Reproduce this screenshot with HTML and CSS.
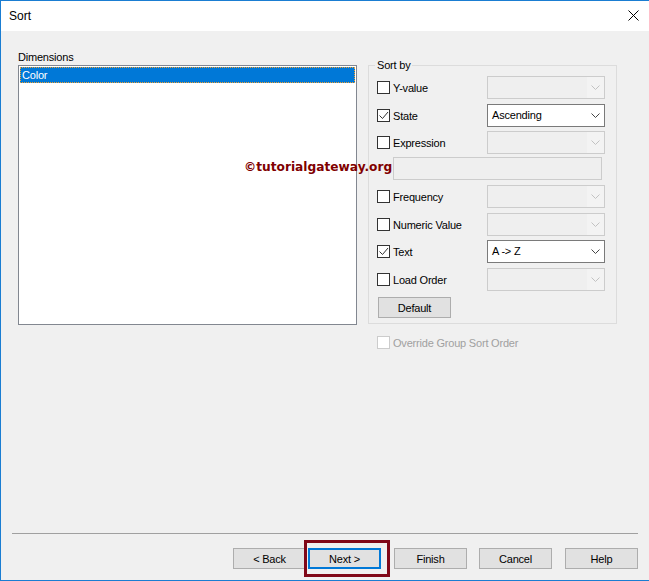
FILE: index.html
```html
<!DOCTYPE html>
<html>
<head>
<meta charset="utf-8">
<link rel="stylesheet" href="styles.css">
</head>
<body>
<div class="window">
  <div class="titlebar">
    <span class="title">Sort</span>
    <svg class="close" width="11" height="11" viewBox="0 0 11 11"><path d="M0.5 0.5 L10.5 10.5 M10.5 0.5 L0.5 10.5" stroke="#000" stroke-width="1" fill="none"/></svg>
  </div>
  <div class="body">
    <div class="main">
      <div class="left">
        <div class="label">Dimensions</div>
        <div class="listbox">
          <div class="item selected">Color</div>
        </div>
      </div>
      <div class="right">
        <fieldset class="group">
          <legend>Sort by</legend>
          <div class="row">
            <label class="check"><span class="box"></span><span>Y-value</span></label>
            <div class="combo disabled"><span class="value"></span><span class="drop"><svg width="9" height="5" viewBox="0 0 9 5"><path d="M0.5 0.5 L4.5 4.5 L8.5 0.5" stroke="#c2c2c2" fill="none"/></svg></span></div>
          </div>
          <div class="row r27">
            <label class="check"><span class="box"><svg width="11" height="11" viewBox="0 0 11 11"><path d="M1.5 5.5 L4.5 8.5 L10 2" stroke="#333" fill="none"/></svg></span><span>State</span></label>
            <div class="combo"><span class="value">Ascending</span><span class="drop"><svg width="9" height="5" viewBox="0 0 9 5"><path d="M0.5 0.5 L4.5 4.5 L8.5 0.5" stroke="#444" fill="none"/></svg></span></div>
          </div>
          <div class="row r26">
            <label class="check"><span class="box"></span><span>Expression</span></label>
            <div class="combo disabled"><span class="value"></span><span class="drop"><svg width="9" height="5" viewBox="0 0 9 5"><path d="M0.5 0.5 L4.5 4.5 L8.5 0.5" stroke="#c2c2c2" fill="none"/></svg></span></div>
          </div>
          <div class="row">
            <div class="textbox"></div>
          </div>
          <div class="row">
            <label class="check"><span class="box"></span><span>Frequency</span></label>
            <div class="combo disabled"><span class="value"></span><span class="drop"><svg width="9" height="5" viewBox="0 0 9 5"><path d="M0.5 0.5 L4.5 4.5 L8.5 0.5" stroke="#c2c2c2" fill="none"/></svg></span></div>
          </div>
          <div class="row r27">
            <label class="check"><span class="box"></span><span>Numeric Value</span></label>
            <div class="combo disabled"><span class="value"></span><span class="drop"><svg width="9" height="5" viewBox="0 0 9 5"><path d="M0.5 0.5 L4.5 4.5 L8.5 0.5" stroke="#c2c2c2" fill="none"/></svg></span></div>
          </div>
          <div class="row">
            <label class="check"><span class="box"><svg width="11" height="11" viewBox="0 0 11 11"><path d="M1.5 5.5 L4.5 8.5 L10 2" stroke="#333" fill="none"/></svg></span><span>Text</span></label>
            <div class="combo"><span class="value">A -&gt; Z</span><span class="drop"><svg width="9" height="5" viewBox="0 0 9 5"><path d="M0.5 0.5 L4.5 4.5 L8.5 0.5" stroke="#444" fill="none"/></svg></span></div>
          </div>
          <div class="row r29">
            <label class="check"><span class="box"></span><span>Load Order</span></label>
            <div class="combo disabled"><span class="value"></span><span class="drop"><svg width="9" height="5" viewBox="0 0 9 5"><path d="M0.5 0.5 L4.5 4.5 L8.5 0.5" stroke="#c2c2c2" fill="none"/></svg></span></div>
          </div>
          <div class="default-row">
            <button class="btn small">Default</button>
          </div>
        </fieldset>
        <label class="override"><span class="box dis"></span><span>Override Group Sort Order</span></label>
      </div>
    </div>
    <div class="separator"></div>
    <div class="buttons">
      <button class="btn back">&lt; Back</button>
      <span class="next-wrap">
        <button class="btn next">Next &gt;</button>
        <span class="highlight"></span>
      </span>
      <button class="btn finish">Finish</button>
      <button class="btn cancel">Cancel</button>
      <button class="btn">Help</button>
    </div>
  </div>
  <div class="watermark">©tutorialgateway.org</div>
</div>
</body>
</html>
```

FILE: styles.css
```css
* { box-sizing: border-box; }
html, body { margin: 0; padding: 0; background: #f0f0f0; }
body { font-family: "Liberation Sans", Arial, sans-serif; font-size: 11px; color: #000; }

.window {
  position: relative;
  width: 649px;
  height: 581px;
  border-top: 1px solid #1a7dd2;
  border-left: 1px solid #1a7dd2;
  border-bottom: 1px solid #1a7dd2;
  display: flex;
  flex-direction: column;
  overflow: hidden;
}

.titlebar {
  height: 30px;
  background: #fff;
  display: flex;
  align-items: center;
  justify-content: space-between;
  padding: 0 10px 0 8px;
  flex: none;
}
.title { font-size: 12px; line-height: 16px; }
.close { display: block; margin-top: -1px; }

.body {
  flex: 1;
  background: #f0f0f0;
  display: flex;
  flex-direction: column;
  letter-spacing: -0.2px;
}

.main {
  display: flex;
  padding: 19px 0 0 17px;
}

.left { width: 339px; flex: none; }
.label { height: 15px; line-height: 13px; padding-top: 1px; }
.listbox {
  height: 260px;
  background: #fff;
  border: 1px solid #828790;
  padding: 1px;
}
.item { height: 16px; line-height: 15px; padding: 1px 0 0 2px; }
.item.selected {
  background: #0078d7;
  color: #fff;
  outline: 1px dotted #f0a030;
  outline-offset: -1px;
}

.right { width: 249px; margin-left: 11px; margin-top: 9px; flex: none; }
.group {
  margin: 0;
  width: 249px;
  border: 1px solid #dcdcdc;
  padding: 4px 10px 5px 8px;
  min-width: 0;
}
.group legend {
  padding: 0 2px;
  margin-left: -2px;
  line-height: 13px;
  font-size: 11px;
}

.row { display: flex; align-items: flex-start; height: 28px; }
.row.r26 { height: 26px; }
.row.r27 { height: 27px; }
.row.r29 { height: 29px; }

.check {
  width: 110px;
  height: 23px;
  display: flex;
  align-items: center;
  gap: 3px;
}
.box {
  width: 13px;
  height: 13px;
  border: 1px solid #333;
  background: #fff;
  display: flex;
  align-items: center;
  justify-content: center;
  flex: none;
}
.box svg { display: block; }
.box.dis { border-color: #cccccc; }

.combo {
  width: 118px;
  height: 23px;
  border: 1px solid #7a7a7a;
  background: #fff;
  display: flex;
  align-items: center;
}
.combo .value { flex: 1; padding-left: 4px; line-height: 13px; }
.combo .drop {
  width: 17px;
  height: 21px;
  display: flex;
  align-items: center;
  justify-content: center;
}
.combo .drop svg { display: block; }
.combo.disabled { border-color: #cccccc; background: #efefef; }
.combo.disabled .drop { background: #f3f3f3; }

.textbox {
  margin-left: 16px;
  width: 209px;
  height: 23px;
  border: 1px solid #cccccc;
  background: #efefef;
}

.default-row { display: flex; padding-left: 1px; }

.btn {
  width: 73px;
  height: 21px;
  padding: 0;
  border: 1px solid #adadad;
  background: #e1e1e1;
  font-family: "Liberation Sans", Arial, sans-serif;
  font-size: 11px;
  letter-spacing: -0.2px;
  color: #000;
  flex: none;
}

.override {
  display: flex;
  align-items: center;
  gap: 3px;
  margin-top: 12px;
  padding-left: 9px;
  height: 13px;
  color: #a0a0a0;
}

.separator {
  margin: auto 11px 0 11px;
  border-top: 1px solid #a0a0a0;
}

.buttons {
  display: flex;
  justify-content: flex-end;
  padding: 14px 11px 11px 0;
}
.back { margin-right: 2px; }
.next-wrap { position: relative; display: flex; margin-right: 13px; }
.next { border: 2px solid #0078d7; }
.highlight {
  position: absolute;
  left: -4px;
  top: -8px;
  right: -9px;
  bottom: -8px;
  border: 3px solid #800818;
}
.finish { margin-right: 12px; }
.cancel { margin-right: 13px; }

.watermark {
  position: absolute;
  left: 243px;
  top: 158px;
  font-family: "DejaVu Sans", Verdana, sans-serif;
  font-weight: bold;
  font-size: 12.2px;
  color: #800000;
  line-height: 16px;
}
```
